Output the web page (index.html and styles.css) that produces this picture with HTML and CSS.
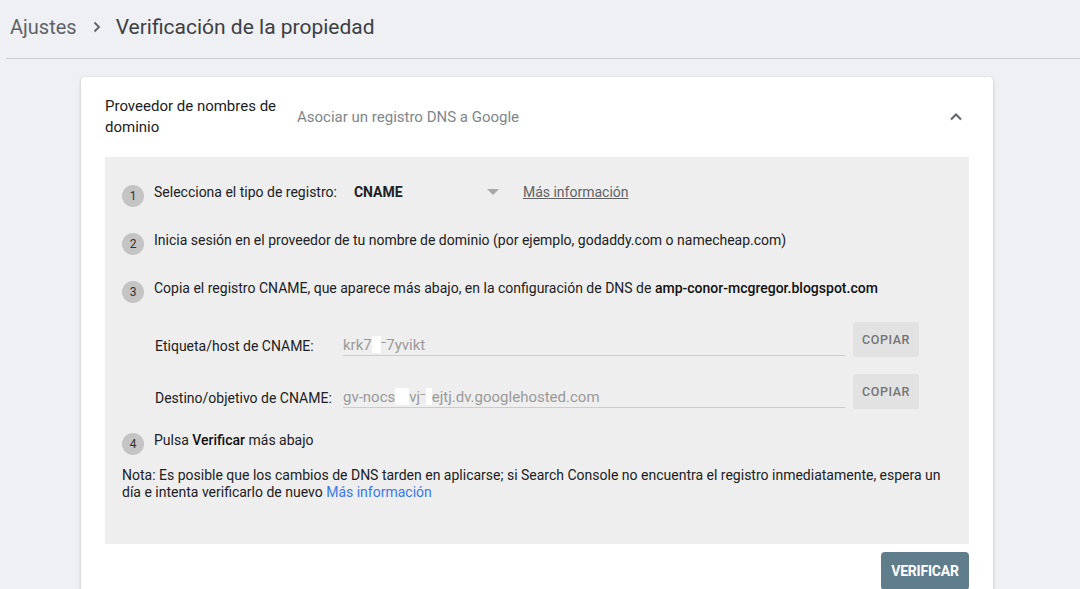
FILE: index.html
```html
<!DOCTYPE html>
<html lang="es">
<head>
<meta charset="utf-8">
<title>Verificación de la propiedad</title>
<link rel="stylesheet" href="styles.css">
</head>
<body>
<header class="topbar">
  <span class="crumb">Ajustes</span>
  <svg class="crumb-sep" width="24" height="24" viewBox="0 0 24 24"><path d="M9.5 7.5l4.5 4.5-4.5 4.5" fill="none" stroke="#5f6368" stroke-width="1.8"/></svg>
  <h1 class="title">Verificación de la propiedad</h1>
</header>

<main class="card">
  <div class="card-head">
    <div class="head-label">Proveedor de nombres de dominio</div>
    <div class="head-desc">Asociar un registro DNS a Google</div>
    <svg class="head-chevron" width="24" height="24" viewBox="0 0 24 24"><path d="M7 14.5l5-5 5 5" fill="none" stroke="#5f6368" stroke-width="2"/></svg>
  </div>

  <section class="panel">
    <div class="step">
      <span class="num">1</span>
      <span class="step-text">Selecciona el tipo de registro:</span>
      <span class="select"><b>CNAME</b><svg class="caret" width="12" height="6" viewBox="0 0 12 6"><path d="M0 0h12L6 6z" fill="#a8a8a8"/></svg></span>
      <a class="more" href="#">Más información</a>
    </div>
    <div class="step">
      <span class="num">2</span>
      <span class="step-text">Inicia sesión en el proveedor de tu nombre de dominio (por ejemplo, godaddy.com o namecheap.com)</span>
    </div>
    <div class="step">
      <span class="num">3</span>
      <span class="step-text">Copia el registro CNAME, que aparece más abajo, en la configuración de DNS de <strong>amp-conor-mcgregor.blogspot.com</strong></span>
    </div>

    <div class="field first">
      <span class="field-label">Etiqueta/host de CNAME:</span>
      <span class="field-input">krk7<span class="redact w8"></span>⁻7yvikt</span>
      <button class="copy">COPIAR</button>
    </div>
    <div class="field">
      <span class="field-label">Destino/objetivo de CNAME:</span>
      <span class="field-input">gv-nocs<span class="redact w14"></span>vj⁻<span class="redact w6"></span>ejtj.dv.googlehosted.com</span>
      <button class="copy">COPIAR</button>
    </div>

    <div class="step last">
      <span class="num">4</span>
      <span class="step-text">Pulsa <strong>Verificar</strong> más abajo</span>
    </div>

    <p class="note">Nota: Es posible que los cambios de DNS tarden en aplicarse; si Search Console no encuentra el registro inmediatamente, espera un día e intenta verificarlo de nuevo <a href="#">Más información</a></p>
  </section>

  <div class="actions">
    <button class="verify">VERIFICAR</button>
  </div>
</main>
</body>
</html>
```

FILE: styles.css
```css
html, body {
  margin: 0;
  padding: 0;
  height: 100%;
  overflow: hidden;
}
body {
  background: #eef0f4;
  font-family: Roboto, "Liberation Sans", Arial, sans-serif;
  color: #202124;
}

.topbar {
  display: flex;
  align-items: center;
  height: 59px;
  margin-left: 6px;
  padding-left: 4px;
  border-bottom: 1px solid #c9ccd1;
  box-sizing: border-box;
  padding-bottom: 4px;
}
.crumb {
  font-size: 20px;
  color: #5f6368;
}
.crumb-sep {
  margin: 0 7px 0 8px;
}
.title {
  margin: 0;
  font-size: 21px;
  font-weight: 400;
  color: #3c4043;
}

.card {
  margin: 18px 0 0 81px;
  width: 912px;
  background: #fff;
  border-radius: 4px;
  box-shadow: 0 1px 2px rgba(60,64,67,.2), 0 1px 3px 1px rgba(60,64,67,.1);
  padding: 0 24px 10px;
  box-sizing: border-box;
}

.card-head {
  display: flex;
  align-items: center;
  height: 80px;
}
.head-label {
  width: 180px;
  margin-right: 12px;
  font-size: 15px;
  line-height: 21px;
  color: #202124;
}
.head-desc {
  flex: 1;
  font-size: 15px;
  color: #80868b;
}
.head-chevron {
  margin-right: 1px;
}

.panel {
  background: #eeeeee;
  padding: 11px 16px 43px 17px;
}

.step {
  display: flex;
  align-items: center;
  height: 48px;
  font-size: 14px;
}
.step.last {
  margin-top: 7px;
}
.num {
  flex: none;
  width: 22px;
  height: 22px;
  margin-top: 8px;
  margin-right: 10px;
  border-radius: 50%;
  background: #c4c4c4;
  color: #333;
  font-size: 12px;
  display: flex;
  align-items: center;
  justify-content: center;
}
.step-text strong {
  font-weight: 500;
  color: #111;
}
.select {
  display: flex;
  align-items: center;
  justify-content: space-between;
  width: 145px;
  margin-left: 17px;
  font-size: 14px;
}
.select b {
  font-weight: 700;
  color: #202124;
}
.more {
  margin-left: 24px;
  color: #5f6368;
  text-decoration: underline;
  font-size: 14px;
}

.field {
  display: flex;
  align-items: flex-end;
  margin-left: 33px;
  height: 35px;
  margin-top: 17px;
}
.field.first {
  margin-top: 10px;
}
.field-label {
  width: 188px;
  font-size: 14px;
  line-height: 18px;
  margin-bottom: 2px;
  color: #202124;
}
.field-input {
  width: 502px;
  height: 20px;
  border-bottom: 1px solid #cccccc;
  font-size: 15px;
  color: #9a9a9a;
  line-height: 18px;
  margin-bottom: 1px;
  box-sizing: border-box;
  white-space: nowrap;
}
.redact {
  display: inline-block;
  height: 17px;
  background: #fff;
  vertical-align: -3px;
}
.w6 { width: 6px; }
.w8 { width: 9px; }
.w14 { width: 14px; }

.copy {
  align-self: flex-start;
  margin-left: 8px;
  width: 66px;
  height: 35px;
  border: none;
  border-radius: 3px;
  background: #e2e2e2;
  color: #757575;
  font-family: Roboto, "Liberation Sans", Arial, sans-serif;
  font-size: 12.5px;
  font-weight: 500;
  letter-spacing: 0.6px;
  padding: 0;
}

.note {
  margin: 3px 0 0 0;
  font-size: 14px;
  line-height: 17px;
  color: #202124;
}
.note a {
  color: #3b78e7;
  text-decoration: none;
}

.actions {
  display: flex;
  justify-content: flex-end;
  padding-top: 8px;
}
.verify {
  width: 88px;
  height: 38px;
  border: none;
  border-radius: 4px;
  background: #607d8b;
  color: #fff;
  font-family: Roboto, "Liberation Sans", Arial, sans-serif;
  font-size: 14px;
  font-weight: 700;
  letter-spacing: -0.2px;
  padding: 0;
}
```
